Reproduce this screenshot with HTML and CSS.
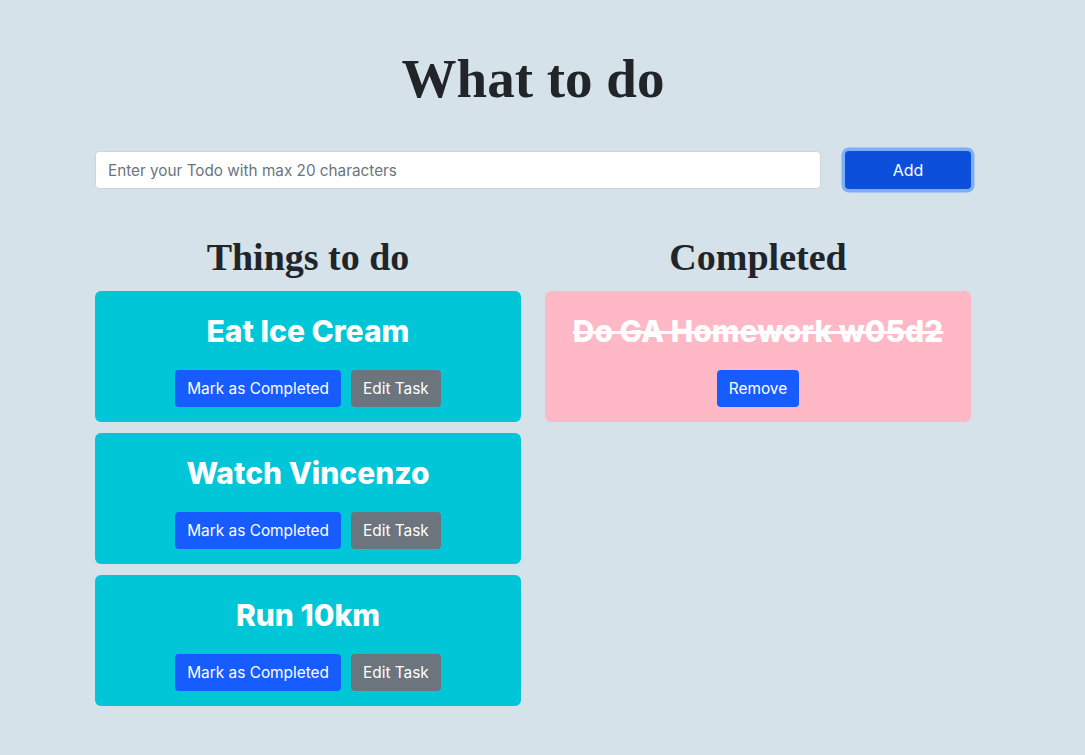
FILE: index.html
```html
<!DOCTYPE html>
<html>
<head>
<meta charset="utf-8">
<link rel="stylesheet" href="styles.css">
</head>
<body>
<div class="app">
  <h1 class="title">What to do</h1>
  <form class="add-form">
    <input class="todo-input" type="text" placeholder="Enter your Todo with max 20 characters">
    <button type="button" class="btn btn-add">Add</button>
  </form>
  <div class="columns">
    <section class="column">
      <h2 class="col-title">Things to do</h2>
      <div class="card card-todo">
        <h3 class="card-title">Eat Ice Cream</h3>
        <div class="actions">
          <button class="btn btn-primary">Mark as Completed</button>
          <button class="btn btn-secondary">Edit Task</button>
        </div>
      </div>
      <div class="card card-todo">
        <h3 class="card-title">Watch Vincenzo</h3>
        <div class="actions">
          <button class="btn btn-primary">Mark as Completed</button>
          <button class="btn btn-secondary">Edit Task</button>
        </div>
      </div>
      <div class="card card-todo">
        <h3 class="card-title">Run 10km</h3>
        <div class="actions">
          <button class="btn btn-primary">Mark as Completed</button>
          <button class="btn btn-secondary">Edit Task</button>
        </div>
      </div>
    </section>
    <section class="column">
      <h2 class="col-title">Completed</h2>
      <div class="card card-done">
        <h3 class="card-title done">Do GA Homework w05d2</h3>
        <div class="actions">
          <button class="btn btn-primary">Remove</button>
        </div>
      </div>
    </section>
  </div>
</div>
</body>
</html>
```
FILE: styles.css
```css
* { box-sizing: border-box; }
html, body { margin: 0; padding: 0; }
body {
  background: #d5e2e9;
  font-family: Inter, "Liberation Sans", sans-serif;
  color: #212529;
  min-height: 755px;
}
.app {
  width: 876px;
  margin-left: 95px;
  padding-top: 46px;
}
.title {
  font-family: "Liberation Serif", serif;
  font-weight: 700;
  font-size: 55px;
  line-height: 66px;
  text-align: center;
  margin: 0 0 39px;
  color: #212529;
}
.add-form {
  display: flex;
  gap: 24px;
  margin: 0;
}
.todo-input {
  flex: 1;
  height: 38px;
  border: 1px solid #ced4da;
  border-radius: 4px;
  background: #fff;
  padding: 6px 12px;
  font-family: Inter, "Liberation Sans", sans-serif;
  font-size: 15.3px;
  color: #495057;
}
.todo-input::placeholder { color: #6c757d; }
.btn {
  border: none;
  border-radius: 4px;
  font-family: Inter, "Liberation Sans", sans-serif;
  font-size: 15.4px;
  color: #fff;
  height: 37px;
  padding: 0 12px;
  cursor: pointer;
}
.btn-add {
  width: 126px;
  height: 38px;
  font-size: 16px;
  background: #0b4fdb;
  box-shadow: 0 0 0 3.5px #7eaef5;
}
.columns {
  display: grid;
  grid-template-columns: 426px 426px;
  gap: 24px;
  margin-top: 45px;
}
.col-title {
  font-family: "Liberation Serif", serif;
  font-weight: 700;
  font-size: 38px;
  line-height: 46px;
  text-align: center;
  margin: 0 0 11px;
}
.card {
  border-radius: 6px;
  padding: 22px 16px 15px;
  text-align: center;
  margin-bottom: 11px;
}
.card-todo { background: #00c6d8; }
.card-done { background: #ffb8c6; }
.card-title {
  margin: 0 0 21px;
  font-size: 30px;
  line-height: 36px;
  font-weight: 800;
  color: #fff;
}
.card-title.done { text-decoration: line-through; }
.actions {
  display: flex;
  justify-content: center;
  gap: 10px;
}
.btn-primary { background: #165cff; }
.btn-secondary { background: #6c757d; }
```
